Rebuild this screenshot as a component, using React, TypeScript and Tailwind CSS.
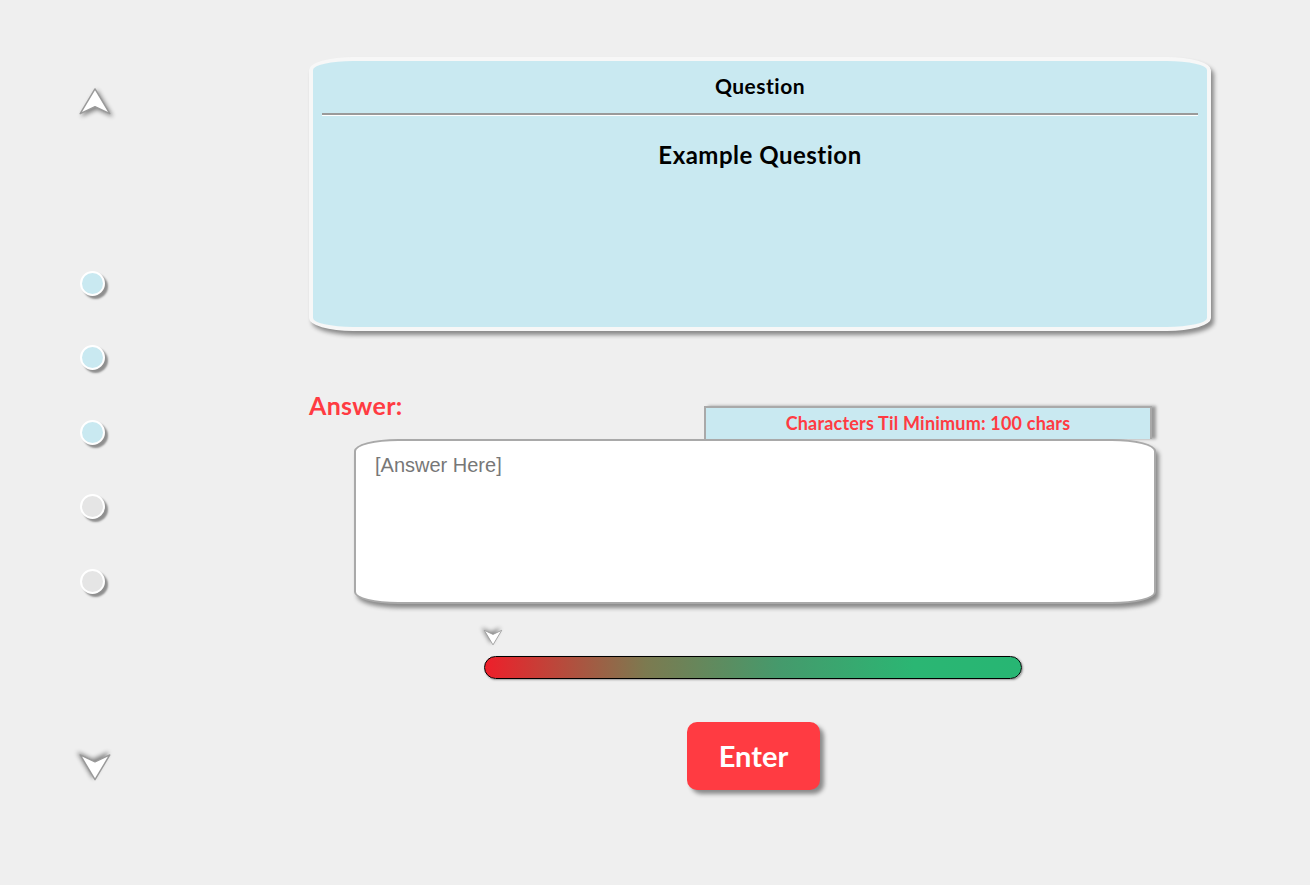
import React from 'react';

const font = { fontFamily: 'Lato, "Noto Sans", sans-serif' };

function NavArrow({ down = false, size = 34 }: { down?: boolean; size?: number }) {
  return (
    <svg
      width={size}
      height={size * 0.9}
      viewBox="0 0 34 31"
      className={down ? 'rotate-180' : ''}
      style={{ filter: 'drop-shadow(2px 2px 2px rgba(0,0,0,0.45))' }}
    >
      <polygon points="17,2 32,27 17,20 2,27" fill="#ffffff" stroke="#9a9a9a" strokeWidth="1.5" strokeLinejoin="round" />
    </svg>
  );
}

function Dot({ active }: { active: boolean }) {
  return (
    <div
      className={`w-[25px] h-[25px] rounded-full border-2 border-white shadow-[3px_3px_2px_#8f8f8f] ${
        active ? 'bg-[#c9e9f1]' : 'bg-[#e5e5e5]'
      }`}
    />
  );
}

export default function App() {
  const steps = [true, true, true, false, false];

  return (
    <div className="min-h-screen w-full bg-[#efefef] flex" style={font}>
      <div className="ml-[78px] w-[34px] flex flex-col items-start pt-[87px]">
        <NavArrow />
        <div className="flex flex-col gap-[49.5px] mt-[153px] ml-[2px]">
          {steps.map((a, i) => (
            <Dot key={i} active={a} />
          ))}
        </div>
        <div className="mt-[157px]">
          <NavArrow down />
        </div>
      </div>

      <div className="ml-[197px] w-[902px] pt-[57px] flex flex-col">
        <section className="h-[274px] bg-[#c9e9f1] border-4 border-[#f7f7f7] rounded-[44px/13px] shadow-[3px_4px_4px_#8a8a8a] px-[9px] pt-[10px]">
          <h2 className="text-center text-[21px] tracking-[0.5px] font-bold text-black leading-[30px]">Question</h2>
          <div className="mt-[12px] h-[3px] border-t-2 border-[#9a9a9a] border-b border-b-white" />
          <p className="mt-[23px] text-center text-[24px] tracking-[0.5px] font-bold text-black leading-[32px]">Example Question</p>
        </section>

        <div className="mt-[60px] w-[843px] flex justify-between items-start">
          <p className="text-[25px] tracking-[0.3px] font-bold text-[#ff3b42] leading-[28px]">Answer:</p>
          <div className="mt-[15px] w-[448px] h-[33px] bg-[#c9e9f1] border-2 border-[#a9a9a9] border-b-0 shadow-[4px_0px_3px_#9a9a9a] flex items-center justify-center">
            <span className="text-[18px] tracking-[0.2px] font-bold text-[#ff3b42]">Characters Til Minimum: 100 chars</span>
          </div>
        </div>

        <div className="ml-[45px] w-[802px] h-[165px] bg-white border-2 border-[#a9a9a9] rounded-[44px/12px] shadow-[3px_4px_4px_#8a8a8a] px-[19px] pt-[9px]">
          <p className="text-[20px] text-[#777777]" style={{ fontFamily: '"Liberation Sans", Arial, sans-serif' }}>
            [Answer Here]
          </p>
        </div>

        <div className="ml-[174px] mt-[24px]">
          <NavArrow down size={20} />
        </div>
        <div className="ml-[175px] mt-[10px] w-[538px] h-[23px] rounded-full border border-black bg-[linear-gradient(to_right,#ee1f2a_0%,#7c7a50_30%,#459a6c_55%,#2bb673_80%,#27b673_100%)] shadow-[1px_1px_2px_#999]" />

        <button className="ml-[378px] mt-[43px] w-[133px] h-[68px] bg-[#ff3b42] rounded-[10px] shadow-[4px_4px_4px_#8a8a8a] text-white text-[29px] font-bold flex items-center justify-center">
          Enter
        </button>
      </div>
    </div>
  );
}
